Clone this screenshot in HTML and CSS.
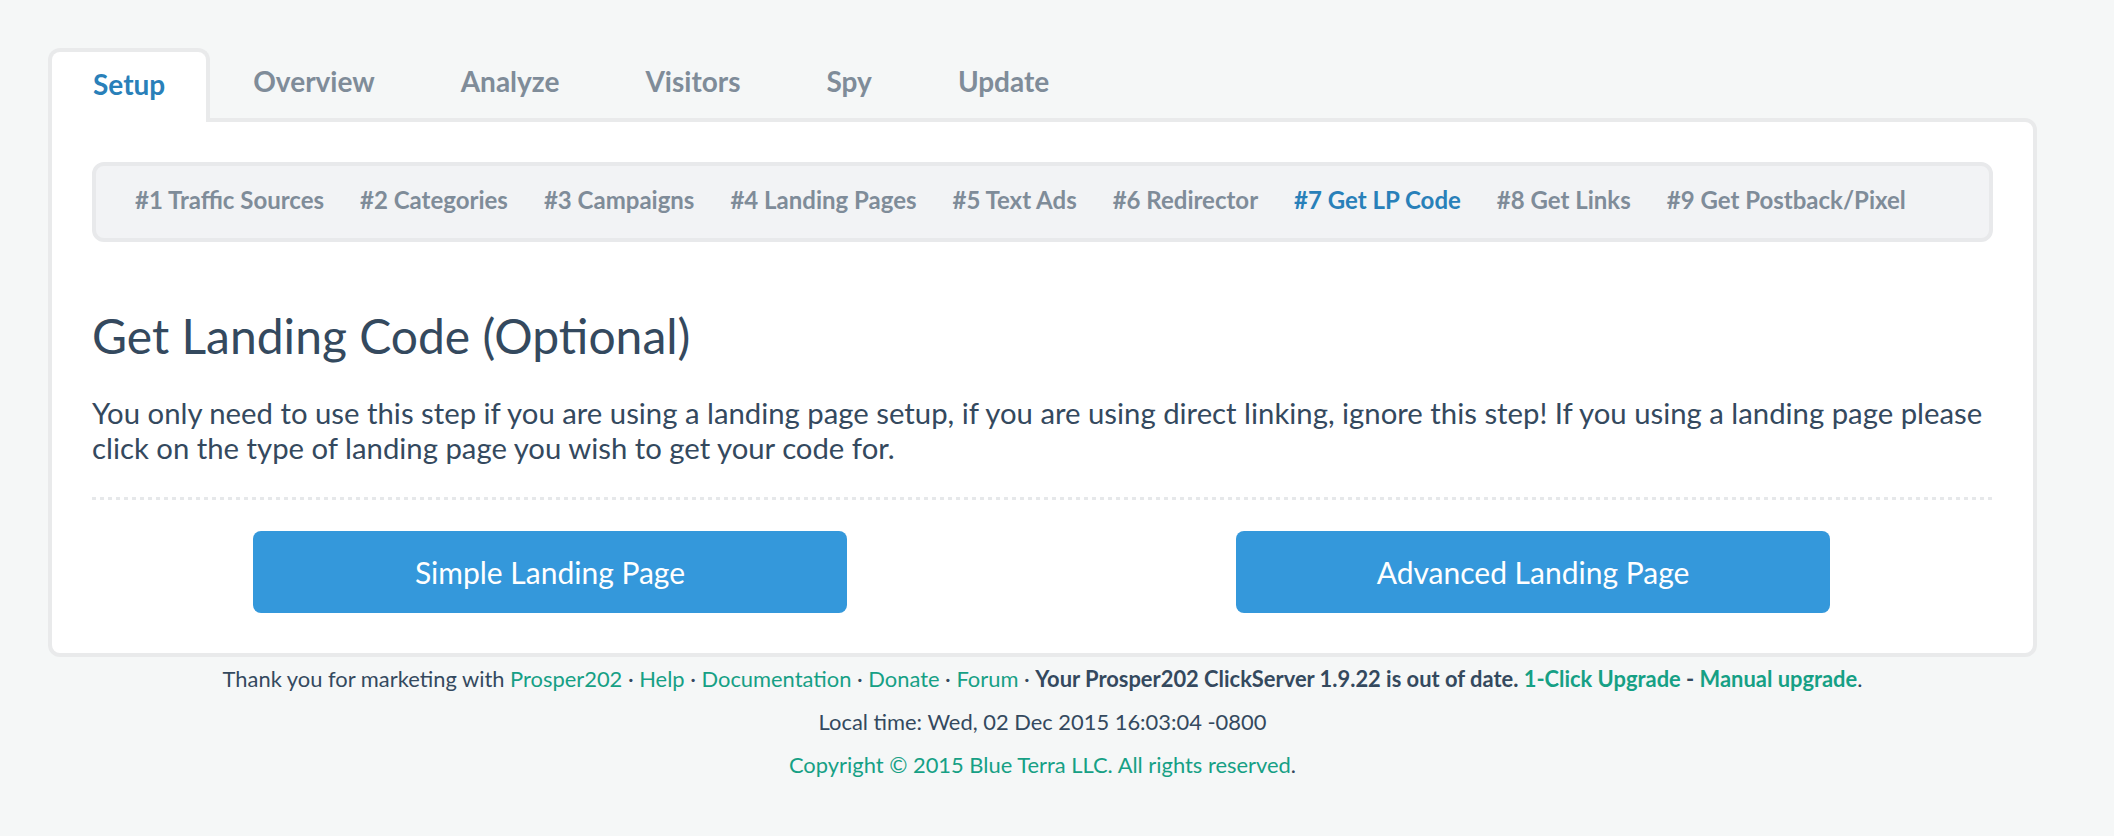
FILE: index.html
```html
<!DOCTYPE html>
<html lang="en">
<head>
<meta charset="utf-8">
<title>Prosper202 - Get LP Code</title>
<link rel="stylesheet" href="styles.css">
</head>
<body>
<div class="page">
  <ul class="tabs">
    <li class="tab active"><a href="#">Setup</a></li>
    <li class="tab"><a href="#">Overview</a></li>
    <li class="tab"><a href="#">Analyze</a></li>
    <li class="tab"><a href="#">Visitors</a></li>
    <li class="tab"><a href="#">Spy</a></li>
    <li class="tab"><a href="#">Update</a></li>
  </ul>
  <div class="panel">
    <ul class="subnav">
      <li><a href="#">#1 Traffic Sources</a></li>
      <li><a href="#">#2 Categories</a></li>
      <li><a href="#">#3 Campaigns</a></li>
      <li><a href="#">#4 Landing Pages</a></li>
      <li><a href="#">#5 Text Ads</a></li>
      <li><a href="#">#6 Redirector</a></li>
      <li class="current"><a href="#">#7 Get LP Code</a></li>
      <li><a href="#">#8 Get Links</a></li>
      <li><a href="#">#9 Get Postback/Pixel</a></li>
    </ul>
    <h2 class="title">Get Landing Code (Optional)</h2>
    <p class="intro">You only need to use this step if you are using a landing page setup, if you are using direct linking, ignore this step! If you using a landing page please click on the type of landing page you wish to get your code for.</p>
    <div class="dots"></div>
    <div class="buttons">
      <a class="btn" href="#">Simple Landing Page</a>
      <a class="btn" href="#">Advanced Landing Page</a>
    </div>
  </div>
  <div class="footer">
    <div class="fline">Thank you for marketing with <a href="#">Prosper202</a> · <a href="#">Help</a> · <a href="#">Documentation</a> · <a href="#">Donate</a> · <a href="#">Forum</a> · <strong>Your Prosper202 ClickServer 1.9.22 is out of date. <a href="#">1-Click Upgrade</a> - <a href="#">Manual upgrade</a></strong>.</div>
    <div class="fline">Local time: Wed, 02 Dec 2015 16:03:04 -0800</div>
    <div class="fline"><a href="#">Copyright © 2015 Blue Terra LLC. All rights reserved</a>.</div>
  </div>
</div>
</body>
</html>
```
FILE: styles.css
```css
html, body {
  margin: 0;
  padding: 0;
}
body {
  background: #f5f7f7;
  font-family: Lato, "Open Sans", "Liberation Sans", sans-serif;
  color: #34495e;
}
a {
  text-decoration: none;
}
.page {
  padding: 48px 77px 0 48px;
}

/* top tabs */
.tabs {
  list-style: none;
  margin: 0 0 -4px 0;
  padding: 0;
  display: flex;
  position: relative;
  z-index: 1;
}
.tab a {
  display: block;
  font-size: 28px;
  font-weight: 700;
  line-height: 34px;
  color: #7f8c99;
  white-space: nowrap;
  padding: 16px 43px 24px 43px;
}
.tab.active {
  background: #fff;
  border: 4px solid #e9eaeb;
  border-bottom: none;
  border-radius: 12px 12px 0 0;
}
.tab.active a {
  color: #2980b9;
  padding: 15px 41px 21px 41px;
}

/* panel */
.panel {
  background: #fff;
  border: 4px solid #e9eaeb;
  border-radius: 0 12px 12px 12px;
  padding: 40px 40px 40px 40px;
}

.subnav {
  list-style: none;
  margin: 0;
  padding: 0 0 0 21px;
  display: flex;
  background: #f2f3f5;
  border: 4px solid #e8e9eb;
  border-radius: 12px;
}
.subnav li {
  flex: none;
}
.subnav a {
  display: block;
  font-size: 24px;
  font-weight: 700;
  line-height: 29px;
  color: #7f8c99;
  white-space: nowrap;
  padding: 19px 18px 24px 18px;
}
.subnav .current a {
  color: #2980b9;
}

.title {
  font-size: 48px;
  font-weight: 400;
  line-height: 58px;
  margin: 65px 0 0 0;
  color: #34495e;
}
.intro {
  font-size: 29.3px;
  line-height: 35px;
  margin: 30px 0 0 0;
  color: #34495e;
}
.dots {
  height: 3px;
  margin-top: 32px;
  background: repeating-linear-gradient(to right, #e6e8ea 0 4px, transparent 4px 8px);
}
.buttons {
  display: flex;
  justify-content: space-between;
  padding: 0 163px 0 161px;
  margin-top: 31px;
}
.btn {
  display: flex;
  align-items: center;
  justify-content: center;
  width: 594px;
  height: 82px;
  background: #3498db;
  border-radius: 8px;
  color: #fff;
  font-size: 30px;
}

/* footer */
.footer {
  text-align: center;
  font-size: 21.9px;
  line-height: 43px;
}
.footer a {
  color: #16a085;
}
.footer strong {
  font-weight: 700;
}
```
